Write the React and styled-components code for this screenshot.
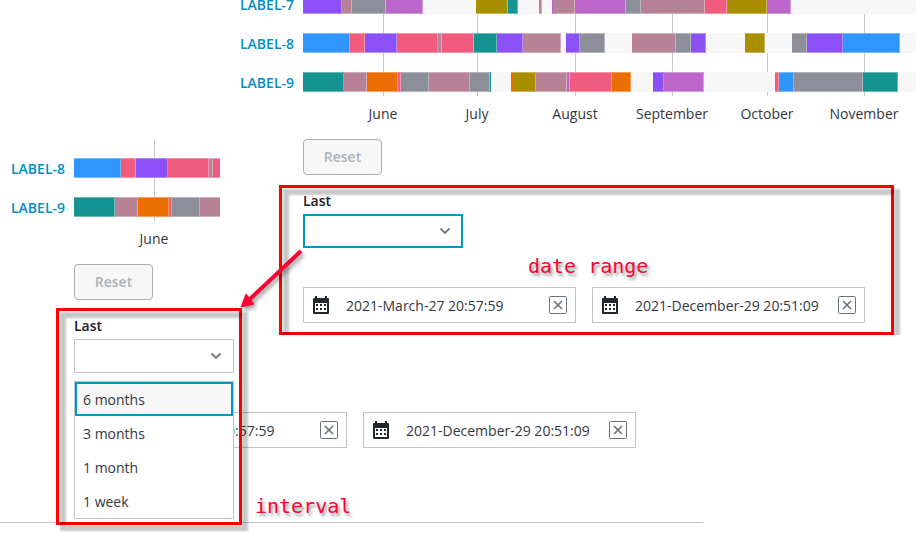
import React from 'react';
import styled, { createGlobalStyle } from 'styled-components';

const GlobalStyle = createGlobalStyle`
  * { box-sizing: border-box; }
  body {
    margin: 0;
    background: #fff;
    color: #343741;
    font: 14px/20px "Open Sans", "Noto Sans", sans-serif;
    overflow-x: hidden;
  }
`;

const Page = styled.main`
  position: relative;
  display: grid;
  grid-template-columns: 229px minmax(0, 1fr);
  align-items: start;
  overflow: hidden;
  padding-bottom: 17px;
`;

const DetailPanel = styled.section`
  grid-column: 1 / -1;
  grid-row: 1;
  max-width: 703px;
  padding-top: 140px;
  padding-bottom: 74px;
  border-bottom: 1px solid #c2c3cc;
`;

const OverviewPanel = styled.section`
  grid-column: 2;
  grid-row: 1;
`;

const ChartLayout = styled.div`
  display: grid;
  grid-template-columns: 65px minmax(0, ${(p) => p.$plotWidth});
  column-gap: 9px;
`;

const RowLabels = styled.nav`
  display: flex;
  flex-direction: column;
  justify-content: flex-end;
  gap: 19px;
  height: ${(p) => p.$height}px;
  padding-bottom: 3px;
  text-align: right;
`;

const RowLink = styled.a`
  flex: none;
  color: #0090c8;
  font-weight: 600;
  line-height: 20px;
  text-decoration: none;
  white-space: nowrap;
`;

const Plot = styled.svg`
  display: block;
  width: 100%;
  height: ${(p) => p.$height}px;
  overflow: hidden;

  text {
    fill: #343741;
    font-size: 14px;
    text-anchor: middle;
  }
`;

const Controls = styled.div`
  padding-left: 74px;
`;

const ResetButton = styled.button`
  display: block;
  width: 79px;
  height: 36px;
  margin-top: 13px;
  border: 1px solid #abb0b8;
  border-radius: 4px;
  background: #f7f7f8;
  color: #abb4ba;
  font: 600 14px/20px "Open Sans", sans-serif;
`;

const FilterForm = styled.form`
  position: relative;
  margin-top: 16px;
`;

const FieldLabel = styled.label`
  display: block;
  height: 23px;
  color: #1a1c21;
  font-weight: 600;
`;

const SelectBox = styled.div`
  position: relative;
  width: 160px;

  svg {
    position: absolute;
    top: 12px;
    right: 12px;
    pointer-events: none;
  }
`;

const IntervalSelect = styled.select`
  display: block;
  width: 100%;
  height: 34px;
  padding: 0 32px 0 8px;
  appearance: none;
  border: ${(p) => (p.$active ? '2px solid #0096c9' : '1px solid #c2c3cc')};
  border-radius: 0;
  outline: none;
  background: #fff;
  font: inherit;
`;

const Menu = styled.div`
  position: absolute;
  z-index: 2;
  top: 42px;
  left: 0;
  width: 100%;
  border: 1px solid #c2c3cc;
  background: #fff;
`;

const MenuItem = styled.button`
  display: block;
  width: 100%;
  height: 34px;
  padding: 2px 6px 0;
  border: 2px solid ${(p) => (p.$active ? '#0096c9' : 'transparent')};
  background: ${(p) => (p.$active ? '#f7f7f8' : '#fff')};
  color: #343741;
  font: inherit;
  text-align: left;
`;

const DateRow = styled.div`
  display: flex;
  gap: 16px;
  margin-top: 39px;
`;

const DateBox = styled.div`
  display: flex;
  flex: none;
  align-items: center;
  width: 273px;
  height: 36px;
  padding: 0 8px;
  border: 1px solid #c2c3cc;
  background: #fff;
`;

const DateInput = styled.input`
  flex: 1;
  min-width: 0;
  margin-left: 16px;
  padding: 2px 0 0;
  border: 0;
  outline: 0;
  background: none;
  color: #343741;
  font: inherit;
`;

const ClearButton = styled.button`
  display: flex;
  width: 18px;
  height: 18px;
  padding: 0;
  border: 0;
  background: none;
`;

const Callout = styled.div`
  position: absolute;
  z-index: 3;
  top: ${(p) => p.$top}px;
  left: ${(p) => p.$left}px;
  width: ${(p) => p.$width}px;
  height: ${(p) => p.$height}px;
  border: 3px solid #f00;
  pointer-events: none;
  clip-path: ${(p) => (p.$flatBottom ? 'inset(0 -12px 0 0)' : 'none')};

  &::before {
    content: "";
    position: absolute;
    z-index: -1;
    inset: 1px -9px -9px 1px;
    border: 6px solid rgba(0, 0, 0, 0.22);
    filter: blur(1px);
  }
`;

const Note = styled.span`
  position: absolute;
  z-index: 4;
  top: ${(p) => p.$top}px;
  left: ${(p) => p.$left}px;
  color: #ff0033;
  font: 20px/24px "DejaVu Sans Mono", monospace;
  text-shadow: 2px 3px 3px rgba(0, 0, 0, 0.4);
  white-space: nowrap;
`;

const Arrow = styled.svg`
  position: absolute;
  z-index: 5;
  top: 244px;
  left: 236px;
  filter: drop-shadow(2px 3px 2px rgba(0, 0, 0, 0.4));
  pointer-events: none;
`;

const C = {
  violet: '#8b50f7',
  mauve: '#b78296',
  gray: '#8c8f9a',
  orchid: '#bb66c8',
  olive: '#a98f00',
  teal: '#149490',
  pink: '#f15b7e',
  blue: '#3096ff',
  orange: '#ec6e00',
};

const ROWS = [
  {
    name: 'LABEL-7',
    bars: [
      [0, 39, 'violet'], [39, 49, 'mauve'], [49, 83, 'gray'], [83, 120, 'orchid'],
      [173, 205, 'olive'], [205, 215, 'teal'], [236, 239, 'mauve'], [249, 251, 'orchid'],
      [250, 272, 'mauve'], [272, 323, 'orchid'], [323, 338, 'gray'], [338, 402, 'mauve'],
      [402, 424, 'pink'], [424, 464, 'olive'], [464, 488, 'orchid'],
    ],
  },
  {
    name: 'LABEL-8',
    bars: [
      [0, 47, 'blue'], [47, 62, 'pink'], [62, 94, 'violet'], [94, 135, 'pink'],
      [135, 139, 'mauve'], [139, 171, 'pink'], [171, 194, 'teal'], [194, 220, 'violet'],
      [220, 258, 'mauve'], [263, 277, 'violet'], [277, 302, 'gray'], [329, 373, 'mauve'],
      [373, 388, 'gray'], [388, 403, 'violet'], [442, 462, 'olive'], [489, 504, 'gray'],
      [504, 540, 'violet'], [540, 597, 'blue'],
    ],
  },
  {
    name: 'LABEL-9',
    bars: [
      [0, 41, 'teal'], [41, 64, 'mauve'], [64, 95, 'orange'], [95, 98, 'pink'],
      [98, 126, 'gray'], [126, 167, 'mauve'], [167, 187, 'gray'], [187, 188, 'teal'],
      [208, 211, 'orange'], [210, 233, 'olive'], [233, 264, 'mauve'], [264, 267, 'orchid'],
      [267, 309, 'pink'], [309, 328, 'orange'], [350, 361, 'violet'], [361, 401, 'orchid'],
      [472, 476, 'pink'], [476, 491, 'blue'], [491, 560, 'gray'], [560, 595, 'teal'],
    ],
  },
];

const MONTHS = [
  [80, 'June'], [174, 'July'], [272, 'August'], [369, 'September'], [464, 'October'], [561, 'November'],
];

function Timeline({ rows, months, height, plotWidth = '1fr' }) {
  return (
    <ChartLayout $plotWidth={plotWidth}>
      <RowLabels $height={height} aria-label="Timeline rows">
        {rows.map((r) => <RowLink key={r.name} href={`#${r.name}`}>{r.name}</RowLink>)}
      </RowLabels>
      <Plot $height={height + 30} role="img" aria-label="Timeline">
        {months.map(([x]) => <rect key={x} x={x} y="0" width="1" height={height} fill="#c8c9d0" />)}
        {rows.map((r, i) => {
          const y = height - 24 - 39 * (rows.length - 1 - i);
          return (
            <g key={r.name}>
              <rect x="0" y={y} width="100%" height="20" fill="#f7f7f7" />
              {r.bars.map(([a, b, c]) => (
                <g key={a}>
                  <rect x={a} y={y} width={b - a} height="20" fill={C[c]} />
                  <path
                    d={`M${a} ${y + 0.5}H${b - 0.5}V${y + 19.5}H${a}`}
                    fill="none"
                    stroke="#fff"
                    strokeOpacity={b - a > 2 ? 0.35 : 0}
                  />
                </g>
              ))}
            </g>
          );
        })}
        {months.map(([x, name]) => <text key={name} x={x} y={height + 23}>{name}</text>)}
      </Plot>
    </ChartLayout>
  );
}

const Chevron = () => (
  <svg width="12" height="10" viewBox="0 0 12 10" fill="none" aria-hidden="true">
    <path d="M1.500 2.500 6 7l4.500-4.500" stroke="#747885" strokeWidth="1.800" />
  </svg>
);

const CalendarIcon = () => (
  <svg width="18" height="18" viewBox="0 0 18 18" aria-hidden="true">
    <path d="M3 0h2v2h8V0h2v2h1a1 1 0 0 1 1 1v14a1 1 0 0 1-1 1H2a1 1 0 0 1-1-1V3a1 1 0 0 1 1-1h1z" fill="#20282b" />
    <path d="M3 7h12v9H3z" fill="#fff" />
    <path d="M4 8h2v2H4zm4 0h2v2H8zm4 0h2v2h-2zM4 12h2v2H4zm4 0h2v2H8zm4 0h2v2h-2z" fill="#20282b" />
  </svg>
);

const ClearIcon = () => (
  <svg width="18" height="18" viewBox="0 0 18 18" fill="none" stroke="#69707d" aria-hidden="true">
    <rect x="0.500" y="0.500" width="17" height="17" rx="1" />
    <path d="m5 5 8 8m0-8-8 8" strokeWidth="1.600" />
  </svg>
);

function DateField({ label, value }) {
  return (
    <DateBox>
      <CalendarIcon />
      <DateInput type="text" aria-label={label} defaultValue={value} />
      <ClearButton type="button" aria-label={`Clear ${label}`}><ClearIcon /></ClearButton>
    </DateBox>
  );
}

const INTERVALS = ['6 months', '3 months', '1 month', '1 week'];

function Filters({ id, active, open, children }) {
  return (
    <Controls>
      <ResetButton type="button" disabled>Reset</ResetButton>
      <FilterForm>
        <FieldLabel htmlFor={id}>Last</FieldLabel>
        <SelectBox>
          <IntervalSelect id={id} $active={active} defaultValue="">
            <option value="" />
            {INTERVALS.map((t) => <option key={t}>{t}</option>)}
          </IntervalSelect>
          <Chevron />
          {open && (
            <Menu role="listbox" aria-label="Last">
              {INTERVALS.map((t, i) => (
                <MenuItem key={t} type="button" role="option" aria-selected={i === 0} $active={i === 0}>{t}</MenuItem>
              ))}
            </Menu>
          )}
        </SelectBox>
        <DateRow>
          <DateField label="start date" value="2021-March-27 20:57:59" />
          <DateField label="end date" value="2021-December-29 20:51:09" />
        </DateRow>
        {children}
      </FilterForm>
    </Controls>
  );
}

export default function App() {
  return (
    <>
      <GlobalStyle />
      <Page>
        <DetailPanel>
          <Timeline rows={ROWS.slice(1)} months={MONTHS.slice(0, 1)} height={81} plotWidth="146px" />
          <Filters id="interval-detail" open>
            <Callout $top={-8} $left={-18} $width={186} $height={217} />
            <Note $top={178} $left={181}>interval</Note>
          </Filters>
        </DetailPanel>
        <OverviewPanel>
          <Timeline rows={ROWS} months={MONTHS} height={96} />
          <Filters id="interval-overview" active>
            <Callout $top={-6} $left={-24} $width={615} $height={150} $flatBottom />
            <Note $top={63} $left={225}>date range</Note>
          </Filters>
        </OverviewPanel>
        <Arrow width="72" height="70" viewBox="0 0 72 70" aria-hidden="true">
          <path d="M65 7 14 55" stroke="#ff0033" strokeWidth="4" />
          <path d="M5 63 10 50 18 60z" fill="#ff0033" stroke="#ff0033" strokeLinejoin="round" />
        </Arrow>
      </Page>
    </>
  );
}
